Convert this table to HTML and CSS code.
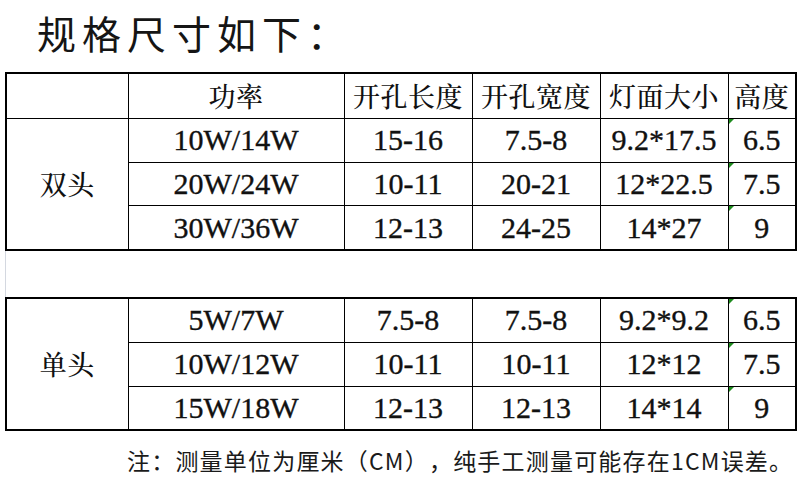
FILE: index.html
```html
<!DOCTYPE html>
<html lang="zh">
<head>
<meta charset="utf-8">
<title>规格尺寸</title>
<link rel="stylesheet" href="styles.css">
</head>
<body>
<div class="page">
  <h1 class="title">规格尺寸如下：</h1>
  <table class="spec">
    <colgroup><col class="c1"><col class="c2"><col class="c3"><col class="c4"><col class="c5"><col class="c6"></colgroup>
    <tr class="head">
      <td></td><td class="cjk">功率</td><td class="cjk">开孔长度</td><td class="cjk">开孔宽度</td><td class="cjk">灯面大小</td><td class="cjk">高度</td>
    </tr>
    <tr>
      <td rowspan="3" class="cjk">双头</td><td>10W/14W</td><td>15-16</td><td>7.5-8</td><td>9.2*17.5</td><td class="mark">6.5</td>
    </tr>
    <tr>
      <td>20W/24W</td><td>10-11</td><td>20-21</td><td>12*22.5</td><td class="mark">7.5</td>
    </tr>
    <tr>
      <td>30W/36W</td><td>12-13</td><td>24-25</td><td>14*27</td><td class="mark">9</td>
    </tr>
  </table>
  <div class="gap"></div>
  <table class="spec">
    <colgroup><col class="c1"><col class="c2"><col class="c3"><col class="c4"><col class="c5"><col class="c6"></colgroup>
    <tr>
      <td rowspan="3" class="cjk">单头</td><td>5W/7W</td><td>7.5-8</td><td>7.5-8</td><td>9.2*9.2</td><td class="mark">6.5</td>
    </tr>
    <tr>
      <td>10W/12W</td><td>10-11</td><td>10-11</td><td>12*12</td><td class="mark">7.5</td>
    </tr>
    <tr>
      <td>15W/18W</td><td>12-13</td><td>12-13</td><td>14*14</td><td class="mark">9</td>
    </tr>
  </table>
  <p class="note">注：测量单位为厘米（CM），纯手工测量可能存在1CM误差。</p>
</div>
</body>
</html>
```

FILE: styles.css
```css
html, body {
  margin: 0;
  padding: 0;
  background: #ffffff;
}

.page {
  width: 800px;
  height: 494px;
  padding-left: 5px;
  box-sizing: border-box;
  overflow: hidden;
  color: #111111;
}

.title {
  margin: 0;
  padding-left: 32px;
  height: 72px;
  line-height: 64px;
  font-family: "Noto Sans CJK SC", "Noto Sans", sans-serif;
  font-size: 39px;
  font-weight: 400;
  letter-spacing: 6px;
  color: #151515;
}

.spec {
  width: 790px;
  border-collapse: collapse;
  table-layout: fixed;
  border: 2px solid #000000;
}

.c1 { width: 122px; }
.c2 { width: 216px; }
.c3 { width: 128px; }
.c4 { width: 128px; }
.c5 { width: 128px; }
.c6 { width: 68px; }

.spec td {
  border: 1px solid #000000;
  height: 42.75px;
  padding: 0;
  text-align: center;
  vertical-align: middle;
  font-family: "Liberation Serif", "Times New Roman", serif;
  font-size: 30px;
  line-height: 30px;
  color: #111111;
  -webkit-text-stroke: 0.35px #111111;
}

.spec .head td {
  height: 43.75px;
}

.spec td.cjk {
  font-family: "Noto Serif CJK SC", "Noto Sans CJK SC", serif;
  font-size: 27px;
  font-weight: 500;
  letter-spacing: 0.5px;
  -webkit-text-stroke: 0;
}

.spec td.mark {
  position: relative;
}

.spec td.mark::before {
  content: "";
  position: absolute;
  left: 0;
  top: 0;
  width: 0;
  height: 0;
  border-top: 5px solid #1e8c1e;
  border-right: 5px solid transparent;
}

.gap {
  height: 46px;
  border-left: 1px solid #d4d8e0;
}

.note {
  margin: 0;
  padding-left: 122px;
  height: 60px;
  line-height: 58px;
  font-family: "Noto Sans CJK SC", "Noto Sans", sans-serif;
  font-size: 23px;
  letter-spacing: 1.2px;
  text-spacing-trim: space-all;
  color: #1a1a1a;
  white-space: nowrap;
}
```
